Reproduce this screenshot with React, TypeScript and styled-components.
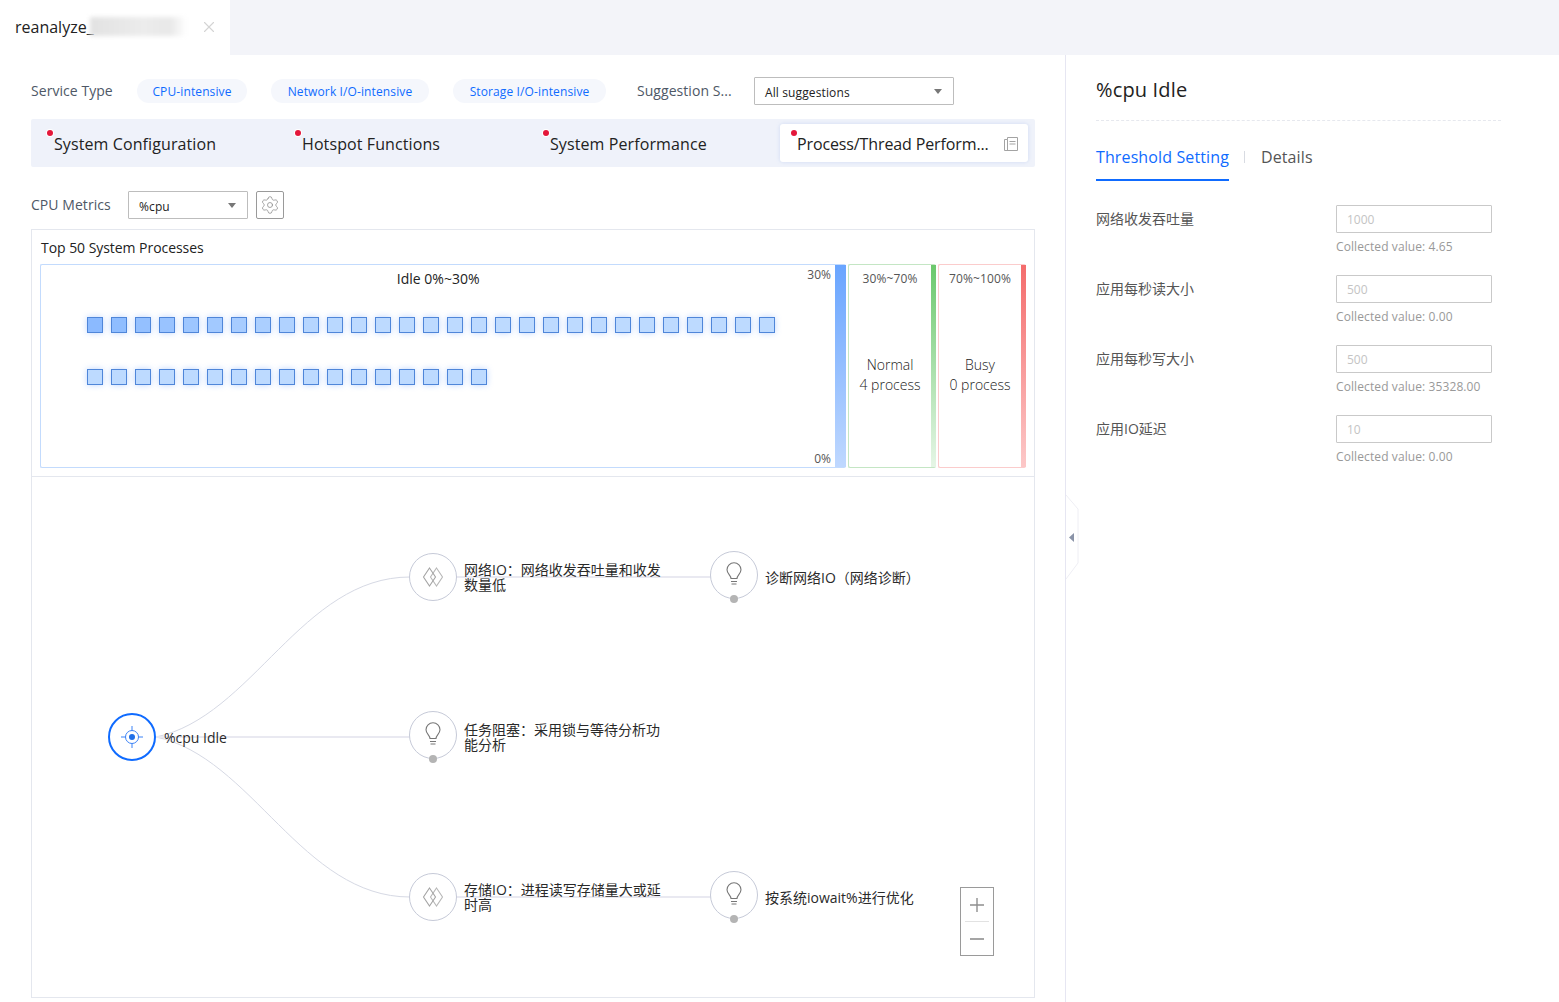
import styled, { createGlobalStyle } from 'styled-components'
import { X, Settings } from 'lucide-react'

const GlobalStyle = createGlobalStyle`
  html, body {
    margin: 0;
    padding: 0;
    background: #fff;
  }
  body {
    font-family: 'Open Sans', 'Noto Sans CJK SC', sans-serif;
    color: #222;
  }
  * {
    box-sizing: border-box;
  }
`

const Page = styled.div`
  width: 1559px;
  height: 1002px;
  overflow: hidden;
  display: flex;
  flex-direction: column;
`

const TopBar = styled.div`
  height: 55px;
  flex: none;
  background: #f3f4f9;
  display: flex;
`

const FileTab = styled.div`
  position: relative;
  width: 230px;
  background: #fff;
  display: flex;
  align-items: center;
  padding: 0 0 2px 15px;
  font-size: 16px;
  color: #222;
`

const BlurredName = styled.span`
  position: absolute;
  left: 90px;
  top: 17px;
  width: 97px;
  height: 19px;
  background: linear-gradient(90deg, #e2e2e2, #ececec 55%, #e8e8e8 82%, #fff);
  filter: blur(2px);
`

const CloseIcon = styled(X)`
  position: absolute;
  left: 200px;
  top: 18px;
`

const Content = styled.div`
  flex: 1;
  display: flex;
  min-height: 0;
`

const Main = styled.div`
  width: 1065px;
  flex: none;
  padding: 22px 30px 0 31px;
`

const ServiceRow = styled.div`
  height: 28px;
  display: flex;
  align-items: center;
`

const FieldLabel = styled.span<{ $width: number }>`
  width: ${(p) => p.$width}px;
  flex: none;
  margin-top: -1px;
  font-size: 14px;
  letter-spacing: 0.05px;
  color: #4e5866;
  white-space: nowrap;
`

const Pills = styled.div`
  display: flex;
  gap: 24px;
  margin-left: 24px;
  margin-right: 31px;
`

const Pill = styled.span<{ $width: number }>`
  width: ${(p) => p.$width}px;
  height: 24px;
  border-radius: 12px;
  background: #f5f7fc;
  color: #0f6bff;
  font-size: 12px;
  letter-spacing: 0.12px;
  display: flex;
  align-items: center;
  justify-content: center;
  padding-top: 1px;
`

const Select = styled.div<{ $width: number }>`
  width: ${(p) => p.$width}px;
  height: 28px;
  border: 1px solid #bdbdbd;
  border-radius: 1px;
  display: flex;
  align-items: center;
  justify-content: space-between;
  padding: 2px 11px 0 10px;
  font-size: 12px;
  letter-spacing: 0.12px;
  color: #222;
  &::after {
    content: '';
    margin-top: -2px;
    border-left: 4px solid transparent;
    border-right: 4px solid transparent;
    border-top: 5px solid #777;
  }
`

const SuggestionSelect = styled(Select)`
  margin-left: 21px;
`

const AnalysisTabs = styled.div`
  height: 48px;
  margin-top: 14px;
  padding: 5px 7px 5px 5px;
  background: #eff2fa;
  border-radius: 2px;
  display: grid;
  grid-template-columns: repeat(4, 248px);
`

const AnalysisTab = styled.div<{ $active?: boolean }>`
  position: relative;
  display: flex;
  align-items: center;
  justify-content: space-between;
  padding: 1px 10px 0 ${(p) => (p.$active ? 17 : 18)}px;
  font-size: 16px;
  letter-spacing: ${(p) => (p.$active ? '-0.12px' : '0.1px')};
  color: #222;
  white-space: nowrap;
  border-radius: 3px;
  background: ${(p) => (p.$active ? '#fff' : 'transparent')};
  box-shadow: ${(p) => (p.$active ? '0 0 4px rgba(90, 130, 220, 0.2)' : 'none')};
  &::before {
    content: '';
    position: absolute;
    left: 11px;
    top: 6px;
    width: 6px;
    height: 6px;
    border-radius: 50%;
    background: #e4173a;
    box-shadow: 0 0 0 1px #fff;
  }
`

const MetricsRow = styled.div`
  height: 28px;
  margin-top: 24px;
  display: flex;
  align-items: center;
`

const MetricsSelect = styled(Select)`
  margin-left: 16px;
`

const GearButton = styled.div`
  width: 28px;
  height: 28px;
  margin-left: 8px;
  border: 1px solid #9a9a9a;
  border-radius: 2px;
  display: flex;
  align-items: center;
  justify-content: center;
  color: #888;
`

const ProcessCard = styled.div`
  margin-top: 10px;
  height: 248px;
  border: 1px solid #e4e7ee;
  padding: 0 8px;
`

const CardTitle = styled.div`
  height: 34px;
  display: flex;
  align-items: center;
  padding: 1px 0 0 1px;
  font-size: 14px;
  letter-spacing: -0.05px;
  color: #222;
`

const Buckets = styled.div`
  display: flex;
  gap: 2px;
  height: 204px;
`

const IdleBucket = styled.div`
  width: 806px;
  display: flex;
  border: 1px solid #c3dbfd;
  border-right: none;
  border-radius: 2px;
`

const IdleBody = styled.div`
  flex: 1;
  padding-top: 6px;
`

const IdleTitle = styled.div`
  font-size: 14px;
  line-height: 16px;
  text-align: center;
  color: #222;
  padding-left: 28px;
`

const Squares = styled.div`
  width: 740px;
  margin-top: 30px;
  padding-left: 46px;
  display: flex;
  flex-wrap: wrap;
  gap: 36px 8px;
`

const ProcessSquare = styled.div<{ $level: number }>`
  width: 16px;
  height: 16px;
  border: 1px solid #4f86d9;
  background: ${(p) => `rgb(${133 + p.$level * 56}, ${182 + p.$level * 36}, 255)`};
  box-shadow: 0 0 6px rgba(90, 150, 255, 0.4);
`

const Scale = styled.div`
  display: flex;
  flex-direction: column;
  justify-content: space-between;
  align-items: flex-end;
  padding: 2px 4px 0 0;
  font-size: 12px;
  line-height: 16px;
  color: #555;
`

const ColorBar = styled.div<{ $from: string; $to: string; $width: number }>`
  width: ${(p) => p.$width}px;
  flex: none;
  background: linear-gradient(180deg, ${(p) => p.$from}, ${(p) => p.$to});
`

const SideBucket = styled.div<{ $border: string }>`
  width: 88px;
  display: flex;
  border: 1px solid ${(p) => p.$border};
  border-right: none;
  border-radius: 2px;
`

const SideBody = styled.div`
  flex: 1;
  padding-top: 6px;
  text-align: center;
`

const RangeText = styled.div`
  font-size: 12px;
  line-height: 16px;
  letter-spacing: 0.1px;
  color: #555;
  white-space: nowrap;
`

const StatusText = styled.div`
  margin-top: 68px;
  font-weight: 300;
  font-size: 14px;
  line-height: 20px;
  color: #222;
  white-space: nowrap;
`

const GraphCanvas = styled.div`
  position: relative;
  height: 521px;
  border: 1px solid #e4e7ee;
  border-top: none;
`

const Edges = styled.svg`
  position: absolute;
  left: 0;
  top: 0;
`

const GraphNode = styled.div<{ $x: number; $y: number; $root?: boolean }>`
  position: absolute;
  left: ${(p) => p.$x - 24}px;
  top: ${(p) => p.$y - 24}px;
  width: 48px;
  height: 48px;
  border-radius: 50%;
  background: #fff;
  border: ${(p) => (p.$root ? '2px solid #0f6bff' : '1px solid #c6cad8')};
  display: flex;
  align-items: center;
  justify-content: center;
`

const NodeAnchor = styled.span`
  position: absolute;
  left: 50%;
  bottom: -5px;
  width: 8px;
  height: 8px;
  margin-left: -4px;
  border-radius: 50%;
  background: #b4b4b4;
`

const GraphLabel = styled.div<{ $x: number; $y: number }>`
  position: absolute;
  left: ${(p) => p.$x}px;
  top: ${(p) => p.$y}px;
  transform: translateY(-50%);
  width: 200px;
  font-size: 14px;
  line-height: 15px;
  color: #2a2a2a;
`

const ZoomControl = styled.div`
  position: absolute;
  left: 928px;
  top: 410px;
  width: 34px;
  height: 69px;
  border: 1px solid #9a9a9a;
  background: #fff;
  display: flex;
  flex-direction: column;
  align-items: center;
`

const ZoomButton = styled.div`
  height: 33px;
  flex: none;
  width: 100%;
  display: flex;
  align-items: center;
  justify-content: center;
  color: #8f8f8f;
`

const ZoomDivider = styled.div`
  width: 24px;
  height: 1px;
  flex: none;
  background: #e2e2e2;
`

const SidePanel = styled.div`
  position: relative;
  flex: 1;
  border-left: 1px solid #e6e6f2;
  padding: 0 58px 0 30px;
`

const Collapse = styled.svg`
  position: absolute;
  left: 0;
  top: 440px;
`

const PanelTitle = styled.div`
  height: 66px;
  display: flex;
  align-items: center;
  padding-top: 3px;
  font-size: 20px;
  letter-spacing: 0.15px;
  color: #222;
  border-bottom: 1px dashed #e6e8ee;
`

const PanelTabs = styled.div`
  display: flex;
  align-items: center;
  height: 60px;
  font-size: 16px;
  letter-spacing: 0.12px;
`

const PanelTab = styled.div<{ $active?: boolean }>`
  height: 100%;
  display: flex;
  align-items: center;
  padding-top: 14px;
  color: ${(p) => (p.$active ? '#0f6bff' : '#555')};
  border-bottom: 2px solid ${(p) => (p.$active ? '#0f6bff' : 'transparent')};
`

const TabDivider = styled.div`
  width: 1px;
  height: 12px;
  margin: 12px 16px 0 15px;
  background: #d8dbe2;
`

const FormList = styled.div`
  margin-top: 24px;
  display: flex;
  flex-direction: column;
  gap: 14px;
`

const FormRow = styled.div`
  height: 56px;
  display: grid;
  grid-template-columns: 240px 156px;
`

const FormLabel = styled.div`
  font-size: 14px;
  line-height: 28px;
  color: #555;
`

const ValueInput = styled.div`
  height: 28px;
  border: 1px solid #c9c9c9;
  border-radius: 1px;
  padding-left: 10px;
  font-size: 12px;
  line-height: 27px;
  color: #c4c4c4;
`

const Collected = styled.div`
  margin-top: 6px;
  font-size: 12px;
  line-height: 16px;
  letter-spacing: 0.1px;
  color: #999;
`

const firstRow = 29
const secondRow = 17

const squareLevel = (i: number) => {
  if (i >= firstRow) return 1
  return Math.min(1, 0.1 + i / 12)
}

const CompareIcon = () => (
  <svg width="20" height="20" viewBox="0 0 20 20" fill="none" strokeWidth="1.1">
    <path d="M13.5 1 L19.5 10 L13.5 19 L7.5 10 Z" stroke="#b8b8b8" />
    <path d="M6.5 1 L12.5 10 L6.5 19 L0.5 10 Z" stroke="#a5a5a5" />
  </svg>
)

const BulbIcon = () => (
  <svg width="18" height="26" viewBox="0 0 18 26" fill="none" stroke="#777" strokeWidth="1.1">
    <path d="M6 16.5 C6 13.5 2 11.5 2 7.8 A7 7 0 0 1 16 7.8 C16 11.5 12 13.5 12 16.5 Z" />
    <path d="M6 19.5 H12 M6.5 22 H11.5" />
  </svg>
)

const TargetIcon = () => (
  <svg width="24" height="24" viewBox="0 0 24 24" fill="none" stroke="#3b82f6" strokeWidth="1">
    <circle cx="12" cy="12" r="6.5" />
    <circle cx="12" cy="12" r="3" fill="#1f6fe8" stroke="none" />
    <path d="M12 1 V5.5 M12 18.5 V23 M1 12 H5.5 M18.5 12 H23" />
  </svg>
)

const PagesIcon = () => (
  <svg width="14" height="14" viewBox="0 0 14 14" fill="none" stroke="#a3a3a3" strokeWidth="1">
    <path d="M3.5 2.5 V0.5 H13.5 V13.5 H0.5 V2.5 H3.5 V13.5" />
    <path d="M5.5 4.5 H11.5 M5.5 7 H11.5" />
  </svg>
)

const thresholds = [
  { label: '网络收发吞吐量', value: '1000', collected: '4.65' },
  { label: '应用每秒读大小', value: '500', collected: '0.00' },
  { label: '应用每秒写大小', value: '500', collected: '35328.00' },
  { label: '应用IO延迟', value: '10', collected: '0.00' },
]

const App = () => {
  return (
    <Page>
      <GlobalStyle />
      <TopBar>
        <FileTab>
          reanalyze_
          <BlurredName />
          <CloseIcon size={18} color="#d4d4d4" strokeWidth={1.5} />
        </FileTab>
      </TopBar>
      <Content>
        <Main>
          <ServiceRow>
            <FieldLabel $width={82}>Service Type</FieldLabel>
            <Pills>
              <Pill $width={110}>CPU-intensive</Pill>
              <Pill $width={158}>Network I/O-intensive</Pill>
              <Pill $width={153}>Storage I/O-intensive</Pill>
            </Pills>
            <FieldLabel $width={96}>Suggestion S...</FieldLabel>
            <SuggestionSelect $width={200}>All suggestions</SuggestionSelect>
          </ServiceRow>
          <AnalysisTabs>
            <AnalysisTab>System Configuration</AnalysisTab>
            <AnalysisTab>Hotspot Functions</AnalysisTab>
            <AnalysisTab>System Performance</AnalysisTab>
            <AnalysisTab $active>
              Process/Thread Perform...
              <PagesIcon />
            </AnalysisTab>
          </AnalysisTabs>
          <MetricsRow>
            <FieldLabel $width={81}>CPU Metrics</FieldLabel>
            <MetricsSelect $width={120}>%cpu</MetricsSelect>
            <GearButton>
              <Settings size={20} strokeWidth={0.9} />
            </GearButton>
          </MetricsRow>
          <ProcessCard>
            <CardTitle>Top 50 System Processes</CardTitle>
            <Buckets>
              <IdleBucket>
                <IdleBody>
                  <IdleTitle>Idle 0%~30%</IdleTitle>
                  <Squares>
                    {Array.from({ length: firstRow + secondRow }, (_, i) => (
                      <ProcessSquare key={i} $level={squareLevel(i)} />
                    ))}
                  </Squares>
                </IdleBody>
                <Scale>
                  <span>30%</span>
                  <span>0%</span>
                </Scale>
                <ColorBar $from="#69a5ff" $to="#bfd8ff" $width={11} />
              </IdleBucket>
              <SideBucket $border="#c4e6c4">
                <SideBody>
                  <RangeText>30%~70%</RangeText>
                  <StatusText>
                    Normal
                    <br />4 process
                  </StatusText>
                </SideBody>
                <ColorBar $from="#6cc86c" $to="#e6f6e6" $width={5} />
              </SideBucket>
              <SideBucket $border="#fbcccc">
                <SideBody>
                  <RangeText>70%~100%</RangeText>
                  <StatusText>
                    Busy
                    <br />0 process
                  </StatusText>
                </SideBody>
                <ColorBar $from="#f46c6c" $to="#fcc8c8" $width={5} />
              </SideBucket>
            </Buckets>
          </ProcessCard>
          <GraphCanvas>
            <Edges width="1002" height="520" fill="none">
              <path d="M124 260 C220 240 270 100 378 100" stroke="#d6d9e4" strokeWidth="1" />
              <path d="M124 260 C220 280 270 420 378 420" stroke="#d6d9e4" strokeWidth="1" />
              <path d="M124 260 H378" stroke="#e9e9f1" strokeWidth="2" />
              <path d="M424 100 H680" stroke="#e9e9f1" strokeWidth="2" />
              <path d="M424 420 H680" stroke="#e9e9f1" strokeWidth="2" />
            </Edges>
            <GraphNode $x={100} $y={260} $root>
              <TargetIcon />
            </GraphNode>
            <GraphLabel $x={132} $y={260}>%cpu Idle</GraphLabel>
            <GraphNode $x={401} $y={100}>
              <CompareIcon />
            </GraphNode>
            <GraphLabel $x={432} $y={100}>{'网络IO\uFF1A网络收发吞吐量和收发数量低'}</GraphLabel>
            <GraphNode $x={401} $y={258}>
              <BulbIcon />
              <NodeAnchor />
            </GraphNode>
            <GraphLabel $x={432} $y={260}>{'任务阻塞\uFF1A采用锁与等待分析功能分析'}</GraphLabel>
            <GraphNode $x={401} $y={420}>
              <CompareIcon />
            </GraphNode>
            <GraphLabel $x={432} $y={420}>{'存储IO\uFF1A进程读写存储量大或延时高'}</GraphLabel>
            <GraphNode $x={702} $y={98}>
              <BulbIcon />
              <NodeAnchor />
            </GraphNode>
            <GraphLabel $x={733} $y={100}>{'诊断网络IO\uFF08网络诊断\uFF09'}</GraphLabel>
            <GraphNode $x={702} $y={418}>
              <BulbIcon />
              <NodeAnchor />
            </GraphNode>
            <GraphLabel $x={733} $y={420}>按系统iowait%进行优化</GraphLabel>
            <ZoomControl>
              <ZoomButton>
                <svg width="14" height="14" viewBox="0 0 14 14" stroke="currentColor" strokeWidth="1.4">
                  <path d="M0 7 H14 M7 0 V14" />
                </svg>
              </ZoomButton>
              <ZoomDivider />
              <ZoomButton>
                <svg width="14" height="14" viewBox="0 0 14 14" stroke="currentColor" strokeWidth="1.6">
                  <path d="M0 7 H14" />
                </svg>
              </ZoomButton>
            </ZoomControl>
          </GraphCanvas>
        </Main>
        <SidePanel>
          <Collapse width="14" height="84" viewBox="0 0 14 84" fill="#fff" stroke="#eeeef4">
            <path d="M0 0 L12 14 V68 L0 84" />
            <path d="M8 38 V47 L3 42.5 Z" fill="#8a93a8" stroke="none" />
          </Collapse>
          <PanelTitle>%cpu Idle</PanelTitle>
          <PanelTabs>
            <PanelTab $active>Threshold Setting</PanelTab>
            <TabDivider />
            <PanelTab>Details</PanelTab>
          </PanelTabs>
          <FormList>
            {thresholds.map((row) => (
              <FormRow key={row.label}>
                <FormLabel>{row.label}</FormLabel>
                <div>
                  <ValueInput>{row.value}</ValueInput>
                  <Collected>Collected value: {row.collected}</Collected>
                </div>
              </FormRow>
            ))}
          </FormList>
        </SidePanel>
      </Content>
    </Page>
  )
}

export default App
